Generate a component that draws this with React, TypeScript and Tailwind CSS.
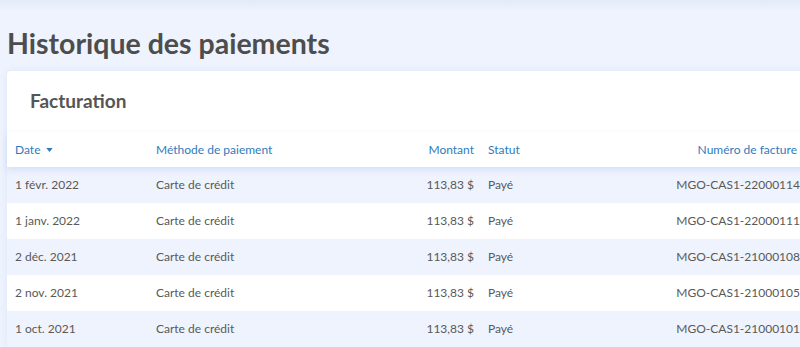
import { useState } from "react"

interface Payment {
  date: string
  method: string
  amount: string
  status: string
  invoice: string
}

const payments: Payment[] = [
  { date: "1 févr. 2022", method: "Carte de crédit", amount: "113,83 $", status: "Payé", invoice: "MGO-CAS1-22000114" },
  { date: "1 janv. 2022", method: "Carte de crédit", amount: "113,83 $", status: "Payé", invoice: "MGO-CAS1-22000111" },
  { date: "2 déc. 2021", method: "Carte de crédit", amount: "113,83 $", status: "Payé", invoice: "MGO-CAS1-21000108" },
  { date: "2 nov. 2021", method: "Carte de crédit", amount: "113,83 $", status: "Payé", invoice: "MGO-CAS1-21000105" },
  { date: "1 oct. 2021", method: "Carte de crédit", amount: "113,83 $", status: "Payé", invoice: "MGO-CAS1-21000101" },
]

const cols = "grid grid-cols-[141px_199px_135px_150px_170px]"

export default function App() {
  const [desc, setDesc] = useState(true)

  return (
    <div className="h-[347px] w-[800px] overflow-hidden bg-[#eef3fd] font-['Lato',sans-serif]">
      <div className="h-[10px] bg-gradient-to-b from-[#e2eaf9] to-[#eef3fd]" />
      <div className="pl-[7px]">
        <h1 className="mt-[16px] h-[45px] text-[28.5px] font-bold leading-[34px] text-[#4d4d4d]">
          Historique des paiements
        </h1>

        <div className="w-[830px] rounded-tl-[4px] bg-white shadow-[0_0_6px_rgba(170,190,230,0.25)]">
          <div className="flex h-[61px] items-center pl-[23px]">
            <h2 className="text-[19px] font-bold text-[#555555]">Facturation</h2>
          </div>

          <div className={`${cols} relative h-[35px] items-center text-[12px] text-[#2f7bbd] shadow-[0_3px_6px_rgba(170,190,230,0.35)]`}>
            <button
              onClick={() => setDesc(!desc)}
              className="flex items-center gap-[6px] pl-[8px] text-left"
            >
              Date
              <svg width="7" height="4" viewBox="0 0 8 5" className={desc ? "" : "rotate-180"}>
                <path d="M0 0h8L4 5z" fill="#2f7bbd" />
              </svg>
            </button>
            <div className="pl-[8px]">Méthode de paiement</div>
            <div className="pr-[8px] text-right">Montant</div>
            <div className="pl-[6px]">Statut</div>
            <div className="pr-[5px] text-right">Numéro de facture</div>
          </div>

          {payments.map((p, i) => (
            <div
              key={p.invoice}
              className={`${cols} h-[36px] items-center text-[12px] text-[#595959] ${i % 2 === 0 ? "bg-[#eef3fd]" : "bg-white"}`}
            >
              <div className="pl-[8px]">{p.date}</div>
              <div className="pl-[8px]">{p.method}</div>
              <div className="pr-[8px] text-right">{p.amount}</div>
              <div className="pl-[6px]">{p.status}</div>
              <div className="whitespace-nowrap pr-[2px] text-right">{p.invoice}</div>
            </div>
          ))}
        </div>
      </div>
    </div>
  )
}
